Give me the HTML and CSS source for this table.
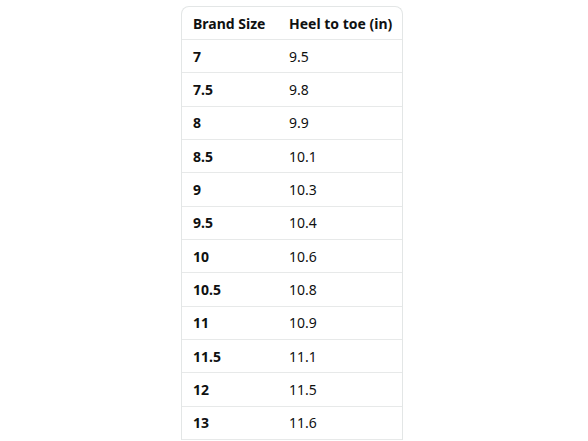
FILE: index.html
```html
<!DOCTYPE html>
<html>
<head>
<meta charset="utf-8">
<link rel="stylesheet" href="styles.css">
</head>
<body>
<div class="wrap">
  <table class="size-table">
    <thead>
      <tr><th class="c1">Brand Size</th><th class="c2">Heel to toe (in)</th></tr>
    </thead>
    <tbody>
      <tr><td class="c1">7</td><td class="c2">9.5</td></tr>
      <tr><td class="c1">7.5</td><td class="c2">9.8</td></tr>
      <tr><td class="c1">8</td><td class="c2">9.9</td></tr>
      <tr><td class="c1">8.5</td><td class="c2">10.1</td></tr>
      <tr><td class="c1">9</td><td class="c2">10.3</td></tr>
      <tr><td class="c1">9.5</td><td class="c2">10.4</td></tr>
      <tr><td class="c1">10</td><td class="c2">10.6</td></tr>
      <tr><td class="c1">10.5</td><td class="c2">10.8</td></tr>
      <tr><td class="c1">11</td><td class="c2">10.9</td></tr>
      <tr><td class="c1">11.5</td><td class="c2">11.1</td></tr>
      <tr><td class="c1">12</td><td class="c2">11.5</td></tr>
      <tr><td class="c1">13</td><td class="c2">11.6</td></tr>
    </tbody>
  </table>
</div>
</body>
</html>
```
FILE: styles.css
```css
html, body {
  margin: 0;
  padding: 0;
  background: #ffffff;
}
.wrap {
  padding: 6px 0 0 181px;
  height: 441px;
  overflow: hidden;
  box-sizing: border-box;
}
.size-table {
  border-collapse: separate;
  border-spacing: 0;
  width: 222px;
  border: 1px solid #e3e6e6;
  border-bottom: none;
  border-radius: 8px 8px 0 0;
  font-family: "Noto Sans", sans-serif;
  font-size: 14px;
  color: #0f1111;
}
.size-table th,
.size-table td {
  height: 33.33px;
  padding: 0 0 0 11px;
  box-sizing: border-box;
  text-align: left;
  vertical-align: middle;
  border-bottom: 1px solid #e7e9e9;
}
.size-table th {
  font-weight: 700;
  height: 33px;
}
.size-table td.c1 {
  font-weight: 700;
}
.size-table td.c2 {
  font-weight: 400;
}
.c1 {
  width: 96px;
}
```
